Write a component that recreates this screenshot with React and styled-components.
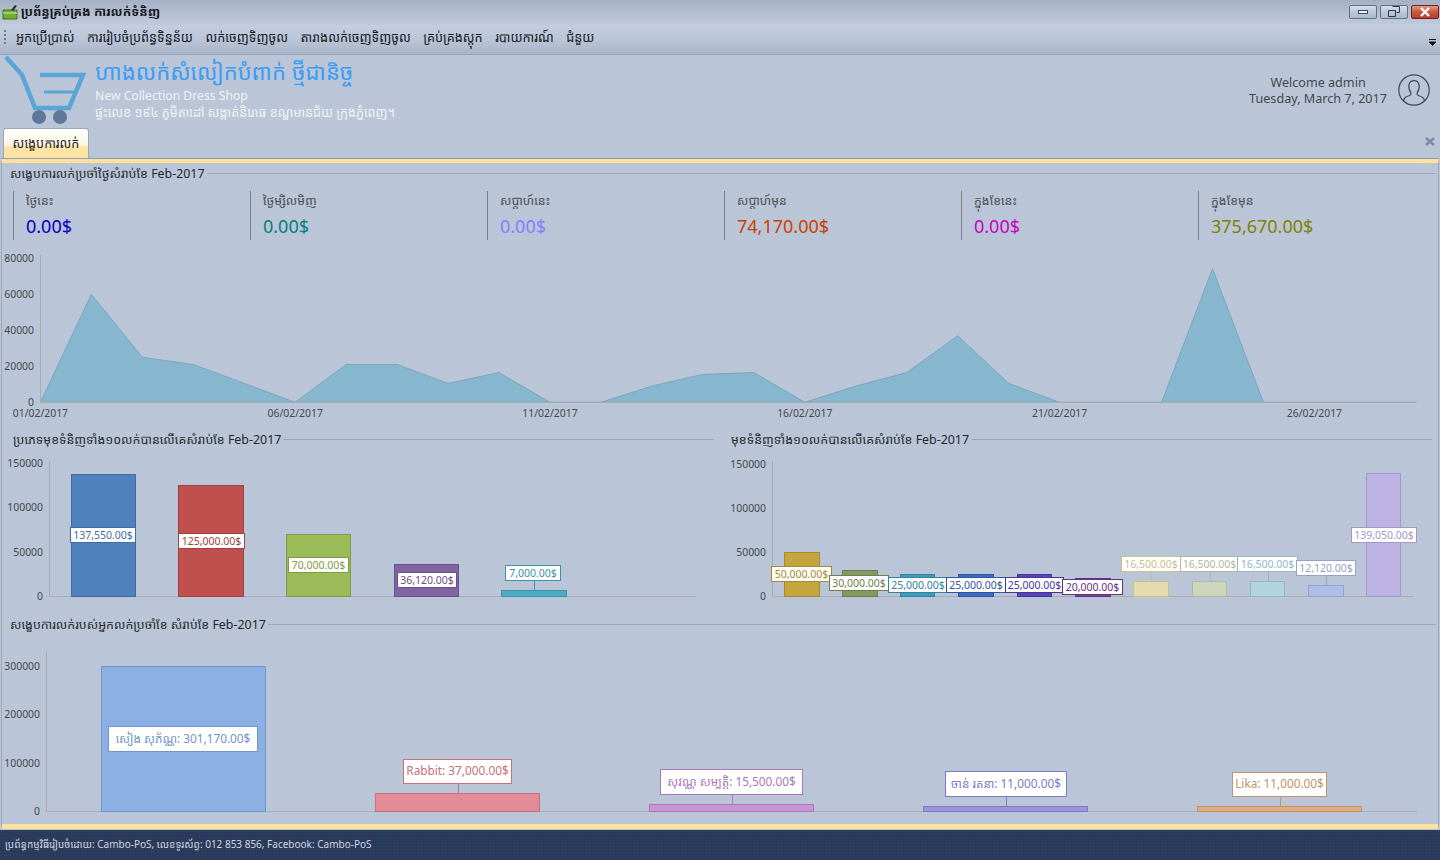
import styled, { createGlobalStyle } from "styled-components";

const FONT = `"Noto Sans", "Noto Sans Khmer", "Khmer OS", "DejaVu Sans", sans-serif`;

const GlobalStyle = createGlobalStyle`
  html, body {
    margin: 0;
    padding: 0;
    height: 100%;
    overflow: hidden;
    background: #bac6d7;
    font-family: ${FONT};
  }
`;

const Page = styled.div`
  width: 1440px;
  height: 860px;
  display: flex;
  flex-direction: column;
  overflow: hidden;
  color: #3c3f48;
  font-size: 12px;
`;

const TitleBar = styled.div`
  height: 25px;
  flex: none;
  display: flex;
  align-items: center;
  padding: 0 1px 2px 2px;
  box-sizing: border-box;
  gap: 3px;
  background: linear-gradient(#a5b0c4, #b9c3d5 70%, #c0cadb);
`;

const TitleText = styled.span`
  font-size: 12.5px;
  font-weight: 700;
  color: #11151c;
  flex: 1;
`;

const WinButtons = styled.div`
  display: flex;
  gap: 3px;
`;

const WinButton = styled.button`
  width: 28px;
  height: 14px;
  padding: 0;
  display: flex;
  align-items: center;
  justify-content: center;
  border-radius: 2px;
  border: 1px solid ${(p) => (p.$close ? "#6d1f24" : "#5f7288")};
  background: ${(p) =>
    p.$close
      ? "linear-gradient(#e39a85, #c9573f 50%, #b33d2d)"
      : "linear-gradient(#d7e0ea, #b9c8d9 50%, #a9bbcf)"};
`;

const MenuBar = styled.div`
  height: 30px;
  flex: none;
  box-sizing: border-box;
  display: flex;
  align-items: center;
  position: relative;
  padding: 0 0 5px 4px;
  background: linear-gradient(#c4cee0, #bac5d8 50%, #a9b4c8);
  border-bottom: 1px solid #96a3b8;
`;

const Grip = styled.i`
  width: 2px;
  height: 15px;
  margin-right: 10px;
  background: repeating-linear-gradient(#6e7a8e 0 2px, transparent 2px 4px);
`;

const MenuItem = styled.span`
  font-size: 12.7px;
  color: #14181f;
  margin-right: 12.5px;
`;

const MenuMore = styled.svg`
  position: absolute;
  right: 4px;
  top: 14px;
`;

const Header = styled.div`
  height: 72px;
  flex: none;
  display: flex;
  align-items: flex-start;
  position: relative;
`;

const ShopInfo = styled.div`
  display: flex;
  flex-direction: column;
  margin-left: 5px;
`;

const ShopName = styled.div`
  font-size: 22px;
  line-height: 32px;
  color: #3c9bf2;
`;

const ShopSub = styled.div`
  font-size: ${(p) => p.$size || 12.2}px;
  line-height: 17px;
  color: #eef2f7;
`;

const UserBox = styled.div`
  margin-left: auto;
  display: flex;
  align-items: center;
  gap: 11px;
  padding: 18px 10px 0 0;
`;

const Welcome = styled.div`
  text-align: center;
  font-size: 12.6px;
  line-height: 16px;
  color: #43464e;
  padding-top: 2px;
`;

const TabRow = styled.div`
  height: 32px;
  flex: none;
  display: flex;
  align-items: flex-end;
  padding: 0 5px 0 3px;
  justify-content: space-between;
`;

const Tab = styled.div`
  width: 86px;
  height: 31px;
  box-sizing: border-box;
  text-align: center;
  font-size: 12.7px;
  line-height: 28px;
  color: #1b1e25;
  border: 1px solid #9aa7ba;
  border-bottom: 0;
  border-radius: 3px 3px 0 0;
  background: linear-gradient(#ffffff, #fff8e6 50%, #fde3a4 62%, #fde3a4);
`;

const TabClose = styled.svg`
  margin-bottom: 13px;
`;

const Panel = styled.div`
  height: 670px;
  flex: none;
  box-sizing: border-box;
  margin: 0 1px;
  display: flex;
  flex-direction: column;
  border: 1px solid #9aa7ba;
  border-radius: 0 0 2px 2px;
  border-top: 4px solid #fde29c;
  border-bottom: 5px solid #fde29c;
  box-shadow: 0 -1px 0 #8f9db2;
`;

const SectionTitle = styled.div`
  height: ${(p) => p.$h || 20}px;
  flex: none;
  display: flex;
  align-items: center;
  gap: 2px;
  padding-left: ${(p) => p.$left || 8}px;
  font-size: 12.4px;
  color: #23262d;
  &::after {
    content: "";
    flex: 1;
    height: 1px;
    background: #9aa8bd;
    margin-right: ${(p) => p.$right || 2}px;
  }
`;

const KpiRow = styled.div`
  height: 48px;
  flex: none;
  display: grid;
  grid-template-columns: repeat(6, 237px);
  margin: 8px 0 4px 11px;
`;

const Kpi = styled.div`
  border-left: 1px solid #7d7f84;
  padding-left: 12px;
  display: flex;
  flex-direction: column;
`;

const KpiLabel = styled.div`
  font-size: 12.3px;
  line-height: 20px;
  color: #4a4c52;
`;

const KpiValue = styled.div`
  font-size: 18px;
  line-height: 28px;
  padding-top: 1px;
  color: ${(p) => p.$color};
`;

const TwoCols = styled.div`
  display: flex;
  height: 20px;
  flex: none;
  margin-top: 4px;
`;

const Col = styled.div`
  width: ${(p) => p.$w}px;
  flex: none;
`;

const ChartSvg = styled.svg`
  display: block;
  flex: none;
`;

const AxisText = styled.text`
  font-family: ${FONT};
  font-size: 10.4px;
  fill: #44464d;
`;

const LabelText = styled.text`
  font-family: ${FONT};
  font-size: ${(p) => p.$size || 10.5}px;
`;

const Footer = styled.div`
  flex: 1;
  margin-top: 1px;
  display: flex;
  align-items: center;
  padding: 0 0 3px 5px;
  font-size: 10px;
  color: #ced6e3;
  background-color: #2a3a5a;
  background-image: radial-gradient(#33435f 0.6px, transparent 0.8px);
  background-size: 3px 3px;
`;

const MENU = [
  "អ្នកប្រើប្រាស់",
  "ការរៀបចំប្រព័ន្ធទិន្នន័យ",
  "លក់ចេញទិញចូល",
  "តារាងលក់ចេញទិញចូល",
  "គ្រប់គ្រងស្តុក",
  "របាយការណ៍",
  "ជំនួយ",
];

const KPIS = [
  { label: "ថ្ងៃនេះ", value: "0.00$", color: "#0000c0" },
  { label: "ថ្ងៃម្សិលមិញ", value: "0.00$", color: "#008080" },
  { label: "សប្តាហ៍នេះ", value: "0.00$", color: "#8080ff" },
  { label: "សប្តាហ៍មុន", value: "74,170.00$", color: "#c84000" },
  { label: "ក្នុងខែនេះ", value: "0.00$", color: "#c800c0" },
  { label: "ក្នុងខែមុន", value: "375,670.00$", color: "#808000" },
];

const DAILY = [
  0, 60000, 25000, 21000, 10500, 0, 21000, 21000, 10500, 16500, 0, 0, 9000, 15500, 16500, 0, 9000,
  16500, 37000, 10500, 0, 0, 0, 74170, 0, 0, 0, 0,
];

const TYPE_BARS = [
  { x1: 71, x2: 136, top: 474, fill: "#4f81bd", line: "#3f6ca6", box: [70, 527, 136, 543], text: "137,550.00$" },
  { x1: 178, x2: 244, top: 485, fill: "#c0504d", line: "#a33f3d", box: [178, 533, 245, 549], text: "125,000.00$" },
  { x1: 286, x2: 351, top: 534, fill: "#9bbb59", line: "#7f9c45", box: [288, 557, 349, 573], text: "70,000.00$" },
  { x1: 394, x2: 459, top: 564, fill: "#8064a2", line: "#68508a", box: [397, 572, 457, 588], text: "36,120.00$" },
  { x1: 501, x2: 567, top: 590, fill: "#4bacc6", line: "#3a93ab", box: [505, 565, 561, 581], text: "7,000.00$", lead: true },
];

const ITEM_BARS = [
  { x1: 784, x2: 820, top: 552, fill: "#c4a53e", line: "#a68a2f", box: [771, 566, 832, 582], text: "50,000.00$" },
  { x1: 842, x2: 878, top: 570, fill: "#83995f", line: "#6a7f4c", box: [829, 575, 889, 591], text: "30,000.00$" },
  { x1: 900, x2: 935, top: 574, fill: "#3f9bb8", line: "#2f83a0", box: [888, 577, 948, 593], text: "25,000.00$" },
  { x1: 958, x2: 994, top: 574, fill: "#3f6abf", line: "#2f55a5", box: [946, 577, 1006, 593], text: "25,000.00$" },
  { x1: 1017, x2: 1052, top: 574, fill: "#5a45b8", line: "#47359d", box: [1005, 577, 1064, 593], text: "25,000.00$" },
  { x1: 1075, x2: 1111, top: 578, fill: "#7b3f96", line: "#65307d", box: [1062, 579, 1123, 595], text: "20,000.00$" },
  { x1: 1133, x2: 1169, top: 581, fill: "#e5dcae", line: "#c9c08f", box: [1121, 556, 1181, 572], text: "16,500.00$", lead: true },
  { x1: 1192, x2: 1227, top: 581, fill: "#cdd5be", line: "#b0b99f", box: [1180, 556, 1239, 572], text: "16,500.00$", lead: true },
  { x1: 1250, x2: 1285, top: 581, fill: "#b2d3e0", line: "#94b7c6", box: [1237, 556, 1298, 572], text: "16,500.00$", lead: true },
  { x1: 1308, x2: 1344, top: 585, fill: "#b0bde6", line: "#94a2cc", box: [1296, 560, 1356, 576], text: "12,120.00$", lead: true },
  { x1: 1366, x2: 1401, top: 473, fill: "#bcb3e3", line: "#a197cb", box: [1351, 527, 1417, 543], text: "139,050.00$" },
];

const SELLER_BARS = [
  { x1: 101, x2: 266, top: 666, fill: "#8cb0e4", line: "#6f95c9", box: [108, 726, 258, 752], text: "សៀង សុភ័ណ្ណ: 301,170.00$" },
  { x1: 375, x2: 540, top: 793, fill: "#e38c97", line: "#c8707c", box: [403, 759, 512, 784], text: "Rabbit: 37,000.00$", lead: true },
  { x1: 649, x2: 814, top: 804, fill: "#c895d5", line: "#aa78b9", box: [660, 769, 803, 795], text: "សុវណ្ណ សម្បត្តិ: 15,500.00$", lead: true },
  { x1: 923, x2: 1088, top: 806, fill: "#9a95db", line: "#7e79c3", box: [945, 771, 1067, 797], text: "ចាន់ រតនា: 11,000.00$", lead: true },
  { x1: 1197, x2: 1362, top: 806, fill: "#e0ad82", line: "#c49168", box: [1232, 772, 1327, 797], text: "Lika: 11,000.00$", lead: true },
];

const CartLogo = () => (
  <svg width="90" height="72" viewBox="0 55 90 72" style={{ flex: "none" }}>
    <path d="M6 57 L22 75 L35 108 L69 108 L83 75 L40 75" fill="none" stroke="#5aa5d6" strokeWidth="4.5" />
    <path d="M44 92 L75 92" stroke="#5aa5d6" strokeWidth="3" />
    <circle cx="39" cy="117" r="7" fill="#5f7899" />
    <circle cx="60" cy="117" r="7" fill="#5f7899" />
  </svg>
);

const AppIcon = () => (
  <svg width="16" height="16" viewBox="0 0 16 16" style={{ flex: "none" }}>
    <path d="M1 6 H15 V15 H1 Z" fill="#6fae2f" stroke="#3f6e1c" />
    <path d="M1 9 H15" stroke="#d6e8a8" />
    <path d="M9 6 L13 1 L15 2 L11 7 Z" fill="#30343a" />
  </svg>
);

const UserIcon = () => (
  <svg width="32" height="32" viewBox="0 0 32 32" fill="none" stroke="#3f4a58" strokeWidth="1.2">
    <circle cx="16" cy="16" r="15.2" />
    <path d="M5.5 27 C6 23.5 8 22.8 11 21.8 C13 21 13.3 19.6 12.6 18.4 C10.8 15.5 10.4 12.6 11 10.4 C11.8 7.6 13.8 6.6 16 6.6 C18.2 6.6 20.2 7.6 21 10.4 C21.6 12.6 21.2 15.5 19.4 18.4 C18.7 19.6 19 21 21 21.8 C24 22.8 26 23.5 26.5 27" />
  </svg>
);

const AreaChart = () => {
  const x = (i) => 40.4 + i * 50.96;
  const y = (v) => 402.3 - v * 0.0018;
  const points = DAILY.map((v, i) => `${x(i)},${y(v)}`).join(" ");
  return (
    <ChartSvg width="1436" height="182" viewBox="2 243 1436 182">
      <polygon points={`${points} ${x(27)},402.3`} fill="#86b7ce" stroke="#7ba6bd" />
      <path d="M40.5 255 V402.5 H1417" fill="none" stroke="#a8abb2" />
      {[0, 20000, 40000, 60000, 80000].map((v) => (
        <AxisText key={v} x="34" y={y(v) + 1} textAnchor="end" dominantBaseline="middle">
          {v}
        </AxisText>
      ))}
      {["01/02/2017", "06/02/2017", "11/02/2017", "16/02/2017", "21/02/2017", "26/02/2017"].map((d, i) => (
        <AxisText key={d} x={x(i * 5)} y="417" textAnchor="middle">
          {d}
        </AxisText>
      ))}
    </ChartSvg>
  );
};

const Bars = ({ data, base, size }) =>
  data.map((b) => {
    const [bx1, by1, bx2, by2] = b.box;
    const mid = (b.x1 + b.x2) / 2;
    return (
      <g key={b.x1}>
        <rect x={b.x1 + 0.5} y={b.top + 0.5} width={b.x2 - b.x1 - 1} height={base - b.top} fill={b.fill} stroke={b.line} />
        {b.lead && <path d={`M${Math.round(mid) + 0.5} ${by2} V${b.top}`} stroke={b.line} />}
        <rect x={bx1 + 0.5} y={by1 + 0.5} width={bx2 - bx1 - 1} height={by2 - by1 - 1} fill="#fff" stroke={b.line} />
        <LabelText
          $size={size}
          x={(bx1 + bx2) / 2}
          y={(by1 + by2) / 2 + (size ? 0.5 : 1.5)}
          textAnchor="middle"
          dominantBaseline="middle"
          fill={b.line}
        >
          {b.text}
        </LabelText>
      </g>
    );
  });

const BarsChart = () => (
  <ChartSvg width="1436" height="165" viewBox="2 449 1436 165">
    <path d="M49.5 461 V596.5 H696" fill="none" stroke="#a8abb2" />
    <path d="M772.5 461 V596.5 H1413" fill="none" stroke="#a8abb2" />
    {[
      [0, 597],
      [50000, 553],
      [100000, 508],
      [150000, 464],
    ].map(([v, yy]) => (
      <AxisText key={v} x="43" y={yy} textAnchor="end" dominantBaseline="middle">
        {v}
      </AxisText>
    ))}
    {[
      [0, 597],
      [50000, 553],
      [100000, 509],
      [150000, 465],
    ].map(([v, yy]) => (
      <AxisText key={v} x="766" y={yy} textAnchor="end" dominantBaseline="middle">
        {v}
      </AxisText>
    ))}
    <Bars data={TYPE_BARS} base={596} />
    <Bars data={ITEM_BARS} base={596} />
  </ChartSvg>
);

const SellerChart = () => (
  <ChartSvg width="1436" height="188" viewBox="2 635 1436 188">
    <path d="M46.5 651 V811.5 H1417" fill="none" stroke="#a8abb2" />
    {[
      [0, 812],
      [100000, 764],
      [200000, 715],
      [300000, 667],
    ].map(([v, yy]) => (
      <AxisText key={v} x="40" y={yy} textAnchor="end" dominantBaseline="middle">
        {v}
      </AxisText>
    ))}
    <Bars data={SELLER_BARS} base={811} size={11.8} />
  </ChartSvg>
);

const App = () => {
  return (
    <Page>
      <GlobalStyle />
      <TitleBar>
        <AppIcon />
        <TitleText>ប្រព័ន្ធគ្រប់គ្រង ការលក់ទំនិញ</TitleText>
        <WinButtons>
          <WinButton>
            <svg width="12" height="6"><rect x="1.5" y="1.5" width="9" height="3" fill="#eef2f6" stroke="#3e4a5a" /></svg>
          </WinButton>
          <WinButton>
            <svg width="12" height="11"><path d="M4.5 .5 H11.5 V6.5 H8.5 M.5 4.5 H7.5 V10.5 H.5 Z" fill="none" stroke="#2f3a48" /></svg>
          </WinButton>
          <WinButton $close>
            <svg width="12" height="10"><path d="M2 1 L10 9 M10 1 L2 9" stroke="#fff" strokeWidth="2.4" /></svg>
          </WinButton>
        </WinButtons>
      </TitleBar>
      <MenuBar>
        <Grip />
        {MENU.map((m) => (
          <MenuItem key={m}>{m}</MenuItem>
        ))}
        <MenuMore width="7" height="7">
          <path d="M0 .5 H7 M0 3 H7 L3.5 6.5 Z" stroke="#111" fill="#111" />
        </MenuMore>
      </MenuBar>
      <Header>
        <CartLogo />
        <ShopInfo>
          <ShopName>ហាងលក់សំលៀកបំពាក់ ថ្មីជានិច្ច</ShopName>
          <ShopSub>New Collection Dress Shop</ShopSub>
          <ShopSub $size={12.6}>ផ្ទះលេខ ១៩៤ ភូមិតាដៅ សង្កាត់និរោធ ខណ្ឌមានជ័យ ក្រុងភ្នំពេញ។</ShopSub>
        </ShopInfo>
        <UserBox>
          <Welcome>
            Welcome admin
            <br />
            Tuesday, March 7, 2017
          </Welcome>
          <UserIcon />
        </UserBox>
      </Header>
      <TabRow>
        <Tab>សង្ខេបការលក់</Tab>
        <TabClose width="10" height="9">
          <path d="M1 1 L9 8 M9 1 L1 8" stroke="#7d8ba6" strokeWidth="2.6" />
        </TabClose>
      </TabRow>
      <Panel>
        <SectionTitle>សង្ខេបការលក់ប្រចាំថ្ងៃសំរាប់ខែ Feb-2017</SectionTitle>
        <KpiRow>
          {KPIS.map((k) => (
            <Kpi key={k.label}>
              <KpiLabel>{k.label}</KpiLabel>
              <KpiValue $color={k.color}>{k.value}</KpiValue>
            </Kpi>
          ))}
        </KpiRow>
        <AreaChart />
        <TwoCols>
          <Col $w={714}>
            <SectionTitle $left={11}>ប្រភេទមុខទំនិញទាំង១០លក់បានលើគេសំរាប់ខែ Feb-2017</SectionTitle>
          </Col>
          <Col $w={722}>
            <SectionTitle $left={15} $right={6}>មុខទំនិញទាំង១០លក់បានលើគេសំរាប់ខែ Feb-2017</SectionTitle>
          </Col>
        </TwoCols>
        <BarsChart />
        <SectionTitle $h={21}>សង្ខេបការលក់របស់អ្នកលក់ប្រចាំខែ សំរាប់ខែ Feb-2017</SectionTitle>
        <SellerChart />
      </Panel>
      <Footer>ប្រព័ន្ធកម្មវិធីរៀបចំដោយ: Cambo-PoS, លេខទូរស័ព្ទ: 012 853 856, Facebook: Cambo-PoS</Footer>
    </Page>
  );
};

export default App;
